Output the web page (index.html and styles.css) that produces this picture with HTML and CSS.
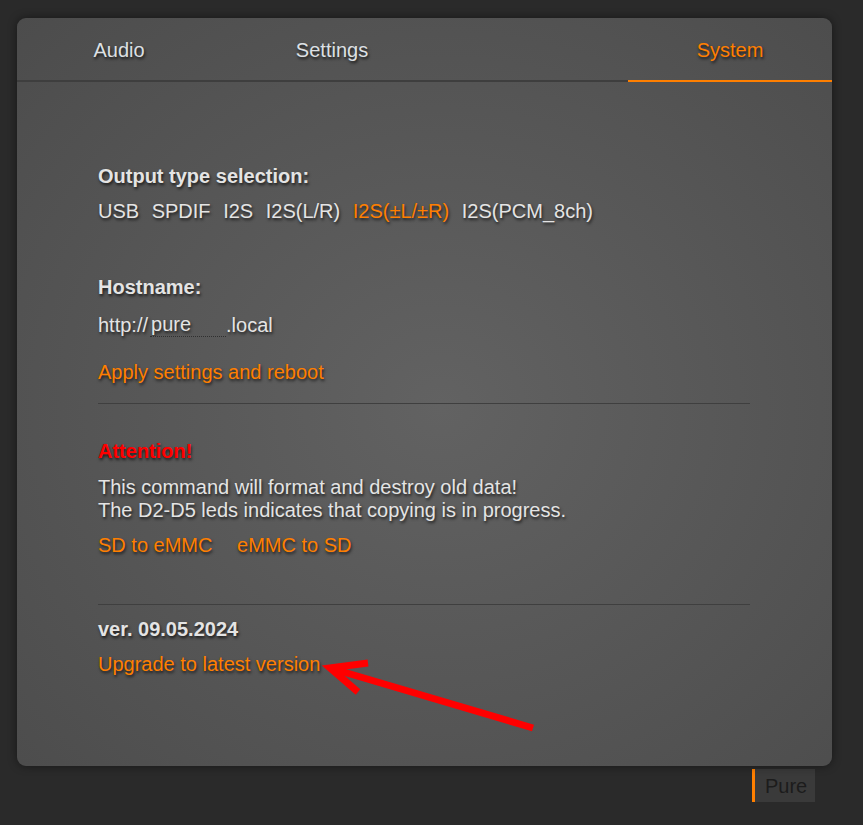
FILE: index.html
```html
<!DOCTYPE html>
<html lang="en">
<head>
  <title>Pure - System</title>
  <meta charset="utf-8" />
  <link rel="stylesheet" href="styles.css">
</head>
<body>
  <div class="wrapper">
    <div class="card">
      <!--tabs-->
      <div class="tabs">
        <div class="tab">Audio</div>
        <div class="tab">Settings</div>
        <div class="tab"></div>
        <div class="tab active">System</div>
      </div>
      <div class="content">
        <div class="label">Output type selection:</div>
        <div class="options">
          <span class="opt">USB</span>
          <span class="opt">SPDIF</span>
          <span class="opt">I2S</span>
          <span class="opt">I2S(L/R)</span>
          <span class="opt selected">I2S(±L/±R)</span>
          <span class="opt">I2S(PCM_8ch)</span>
        </div>

        <div class="label hostname-label">Hostname:</div>
        <div class="host-row">http://<input type="text" class="host-input" value="pure">.local</div>
        <div class="link apply">Apply settings and reboot</div>

        <div class="line"></div>

        <div class="attention">Attention!</div>
        <div class="warn">
          <div>This command will format and destroy old data!</div>
          <div>The D2-D5 leds indicates that copying is in progress.</div>
        </div>
        <div class="copy-links">
          <span class="link">SD to eMMC</span>
          <span class="link">eMMC to SD</span>
        </div>

        <div class="line second"></div>

        <div class="label version">ver. 09.05.2024</div>
        <div class="link">Upgrade to latest version</div>
      </div>
      <!--red arrow pointing at upgrade link-->
      <svg class="arrow" width="230" height="90" viewBox="0 0 230 90">
        <path d="M213 78 L10 18" stroke="#ff0000" stroke-width="7" fill="none"/>
        <path d="M48 13 L10 18 L38 42" stroke="#ff0000" stroke-width="7" fill="none" stroke-linejoin="miter"/>
      </svg>
    </div>
    <div class="footer">
      <div class="badge">Pure</div>
    </div>
  </div>
</body>
</html>
```

FILE: styles.css
```css
body{
  margin: 0;
  background-color: #2a2a2a;
  font-family: "Liberation Sans", Arial, sans-serif;
}
.wrapper{
  width: 815px;
  padding: 18px 0px 0px 17px;
}
.card{
  position: relative;
  height: 748px;
  border-radius: 9px;
  background: radial-gradient(ellipse at 52% 52%, #626262 0%, #585858 45%, #4c4c4c 100%);
  box-shadow: 0px 0px 10px rgba(0,0,0,0.45);
  overflow: hidden;
}
.tabs{
  display: grid;
  grid-template-columns: 204px 222px 1fr 204px;
  height: 64px;
}
.tab{
  display: flex;
  align-items: center;
  justify-content: center;
  padding-top: 2px;
  border-bottom: 2px solid #3e3e3e;
  color: #dde0e4;
  font-size: 20px;
  text-shadow: 1px 2px 3px rgba(0,0,0,0.75);
}
.tab.active{
  border-bottom-color: #ff7f00;
  color: #ff7f00;
}
.content{
  padding: 83px 82px 0px 81px;
  color: #e4e4e4;
  font-size: 20px;
  line-height: 23px;
  text-shadow: 1px 2px 3px rgba(0,0,0,0.7);
}
.label{
  font-weight: bold;
}
.options{
  margin-top: 12px;
}
.opt{
  margin-right: 7px;
}
.selected{
  color: #ff7f00;
}
.hostname-label{
  margin-top: 53px;
}
.host-row{
  margin-top: 14px;
  display: flex;
  align-items: center;
}
.host-input{
  width: 75px;
  margin: 0px 0px 0px 2px;
  padding: 0px 0px 0px 1px;
  height: 23px;
  border: none;
  border-bottom: 1px dotted #303030;
  background: transparent;
  color: #e4e4e4;
  font-family: "Liberation Sans", Arial, sans-serif;
  font-size: 20px;
  text-shadow: 1px 2px 3px rgba(0,0,0,0.7);
  outline: none;
}
.link{
  color: #ff7f00;
}
.apply{
  margin-top: 24px;
}
.line{
  margin-top: 19px;
  height: 1px;
  background-color: #3f3f3f;
}
.attention{
  margin-top: 36px;
  color: #ff0000;
  font-weight: bold;
}
.warn{
  margin-top: 13px;
}
.copy-links{
  margin-top: 12px;
}
.copy-links .link{
  margin-right: 19px;
}
.line.second{
  margin-top: 47px;
}
.version{
  margin-top: 13px;
  margin-bottom: 12px;
}
.arrow{
  position: absolute;
  left: 303px;
  top: 632px;
}
.footer{
  display: flex;
  justify-content: flex-end;
  padding: 3px 17px 0px 0px;
}
.badge{
  width: 50px;
  height: 33px;
  padding-left: 10px;
  border-left: 3px solid #ff7f00;
  background-color: #3a3a3a;
  color: #1c1c1c;
  font-size: 20px;
  line-height: 34px;
}
```
